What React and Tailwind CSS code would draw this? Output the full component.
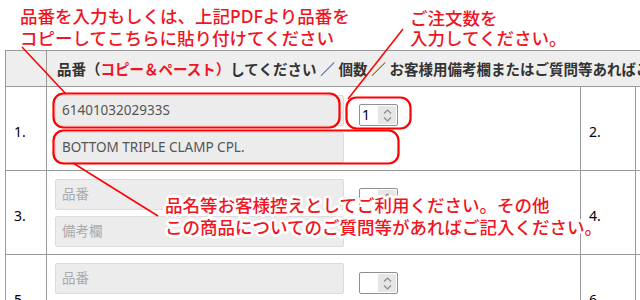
import React from 'react';

const rows = [
  { a: '1.', b: '2.', code: '6140103202933S', note: 'BOTTOM TRIPLE CLAMP CPL.', qty: '1' },
  { a: '3.', b: '4.', code: '', note: '', qty: '' },
  { a: '5.', b: '6.', code: '', note: '', qty: '' },
];

const Field = ({ value, placeholder }) => (
  <div className="w-[289px] h-[31px] shrink-0 bg-[#ececec] border border-[#dcdcdc] rounded-[2px] px-[6px] flex items-center text-[13.5px]">
    {value ? (
      <span className="text-[#555]">{value}</span>
    ) : (
      <span className="text-[#aaa]">{placeholder}</span>
    )}
  </div>
);

const NumberBox = ({ value }) => (
  <div className="w-[39px] h-[22px] border border-[#8f8f8f] rounded-[2px] bg-white flex items-center pl-[2px] pr-[1px]">
    <span className="flex-1 text-[14px] leading-none text-black">{value}</span>
    <div className="w-[18px] h-[18px] bg-[#e6e6e6] flex flex-col items-center justify-center gap-[3px]">
      <svg width="9" height="5" viewBox="0 0 9 5">
        <path d="M1 4.5L4.5 1L8 4.5" fill="none" stroke="#8a8a8a" strokeWidth="1.2" />
      </svg>
      <svg width="9" height="5" viewBox="0 0 9 5">
        <path d="M1 0.5L4.5 4L8 0.5" fill="none" stroke="#8a8a8a" strokeWidth="1.2" />
      </svg>
    </div>
  </div>
);

const halo =
  '[text-shadow:2px_0_#fff,-2px_0_#fff,0_2px_#fff,0_-2px_#fff,2px_2px_#fff,-2px_-2px_#fff,2px_-2px_#fff,-2px_2px_#fff,3px_0_#fff,-3px_0_#fff,0_3px_#fff,0_-3px_#fff]';

export default function App() {
  return (
    <div className="relative w-[640px] h-[300px] overflow-hidden bg-white font-['Noto_Sans','Noto_Sans_CJK_JP',sans-serif]">
      {/* top notes */}
      <div className="h-[50px] flex text-[17.5px] font-medium text-[#f0141e]">
        <div className="pl-[20px] pt-[5px] leading-[22px] w-[410px] whitespace-nowrap">
          <div>品番を入力もしくは、上記PDFより品番を</div>
          <div>コピーしてこちらに貼り付けてください</div>
        </div>
        <div className="pt-[8px] leading-[20px] whitespace-nowrap">
          <div>ご注文数を</div>
          <div>入力してください。</div>
        </div>
      </div>

      {/* order table */}
      <div className="ml-[5px] w-[720px] border-l border-t border-[#999] text-[#333]">
        <div className="flex h-[36px] bg-[#eeeeee] border-b border-[#999]">
          <div className="w-[41px] shrink-0 border-r border-[#999]" />
          <div className="flex-1 pl-[10px] flex items-center pt-[3px] text-[14.5px] font-bold whitespace-nowrap overflow-hidden">
            品番<span>（</span><span className="text-[#f0141e]">コピー＆ペースト）</span>してください ／ 個数 ／ お客様用備考欄またはご質問等あればご記入ください
          </div>
        </div>
        {rows.map((r) => (
          <div key={r.a} className="flex h-[84px] border-b border-[#999]">
            <div className="w-[41px] shrink-0 border-r border-[#999] flex items-center pl-[8px] pt-[6px] text-[14px] text-black">
              {r.a}
            </div>
            <div className="w-[534px] shrink-0 border-r border-[#999] pl-[8px] pt-[8px] flex flex-col gap-[6px]">
              <div className="flex items-end gap-[15px]">
                <Field value={r.code} placeholder="品番" />
                <NumberBox value={r.qty} />
              </div>
              <Field value={r.note} placeholder="備考欄" />
            </div>
            <div className="w-[55px] shrink-0 border-r border-[#999] flex items-center pl-[8px] pt-[6px] text-[14px] text-black">
              {r.b}
            </div>
            <div className="flex-1" />
          </div>
        ))}
      </div>

      {/* callout marks */}
      <svg className="absolute left-0 top-0 pointer-events-none" width="640" height="300">
        <g fill="none" stroke="#ff0000">
          <rect x="53.5" y="93.5" width="286" height="34" rx="10" strokeWidth="2.2" />
          <rect x="53.5" y="130.5" width="345" height="33" rx="10" strokeWidth="2.2" />
          <rect x="346.5" y="97.5" width="64" height="31" rx="10" strokeWidth="2.2" />
          <line x1="22" y1="47" x2="66" y2="94" strokeWidth="1.5" />
          <line x1="403" y1="29" x2="348" y2="99" strokeWidth="1.5" />
          <line x1="73" y1="163" x2="158" y2="216" strokeWidth="1.5" />
        </g>
      </svg>

      <div
        className={`absolute left-[165px] top-[194px] text-[17.5px] font-medium leading-[22px] text-[#f0141e] whitespace-nowrap ${halo}`}
      >
        <div>品名等お客様控えとしてご利用ください。その他</div>
        <div>この商品についてのご質問等があればご記入ください。</div>
      </div>
    </div>
  );
}
